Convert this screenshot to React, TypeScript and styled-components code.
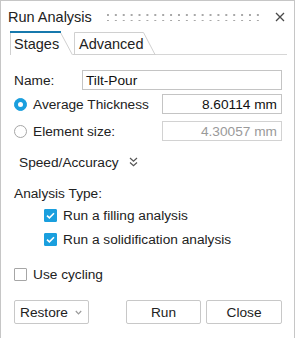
import React, { FC } from 'react';
import styled, { createGlobalStyle } from 'styled-components';

const GlobalStyle = createGlobalStyle`
  html, body {
    margin: 0;
    padding: 0;
    background: #ffffff;
    overflow: hidden;
  }
  body {
    font-family: "Liberation Sans", Arial, sans-serif;
    color: #222222;
  }
`;

const BLUE = '#1a9fde';

const Panel = styled.div`
  box-sizing: border-box;
  width: 295px;
  height: 338px;
  border: 1px solid #c6c6c6;
  border-bottom: none;
  background: #ffffff;
  display: flex;
  flex-direction: column;
`;

const TitleBar = styled.div`
  display: flex;
  align-items: center;
  height: 26px;
  padding: 3px 8px 0 7px;
`;

const Title = styled.div`
  font-size: 14.5px;
  color: #222;
  white-space: nowrap;
`;

const Grip = styled.div`
  flex: 1;
  height: 8px;
  margin: 0 10px 0 15px;
  background-image: radial-gradient(circle, #a8a8a8 1px, transparent 1.3px);
  background-size: 7.9px 6px;
  background-position: -3px -1px;
`;

const CloseButton = styled.button`
  width: 12px;
  height: 12px;
  padding: 0;
  border: none;
  background: transparent;
  display: flex;
  align-items: center;
  justify-content: center;
`;

const TabBar = styled.div`
  display: flex;
  height: 24px;
  margin-top: 1px;
  padding-left: 9px;
`;

const Tab = styled.div<{ $width: number; $active?: boolean }>`
  position: relative;
  width: ${(p) => p.$width}px;
  height: 24px;
  box-sizing: border-box;
  padding: 5px 0 0 ${(p) => (p.$active ? 4 : 6)}px;
  font-size: 14.5px;
  color: #222;
  white-space: nowrap;
  svg {
    position: absolute;
    left: 0;
    top: 0;
  }
  span {
    position: relative;
  }
`;

const TabFill = styled.div`
  flex: 1;
  margin-right: 7px;
  border-bottom: 1px solid #d6d6d6;
`;

const Content = styled.div`
  display: flex;
  flex-direction: column;
  padding: 0 12px 0 13px;
`;

const Row = styled.div<{ $top: number; $indent?: number }>`
  display: flex;
  align-items: center;
  height: 20px;
  margin-top: ${(p) => p.$top}px;
  padding-left: ${(p) => p.$indent ?? 0}px;
  font-size: 13.7px;
  white-space: nowrap;
`;

const Label = styled.div<{ $width: number }>`
  width: ${(p) => p.$width}px;
  flex-shrink: 0;
`;

const Field = styled.div<{ $width: number; $align?: 'left' | 'right'; $disabled?: boolean }>`
  box-sizing: border-box;
  width: ${(p) => p.$width}px;
  height: 20px;
  border: 1px solid ${(p) => (p.$disabled ? '#d2d2d2' : '#c4c4c4')};
  padding: 0 4px 0 3px;
  display: flex;
  align-items: center;
  justify-content: ${(p) => (p.$align === 'right' ? 'flex-end' : 'flex-start')};
  color: ${(p) => (p.$disabled ? '#9a9a9a' : '#111')};
  font-size: 13.7px;
`;

const Radio = styled.span<{ $checked?: boolean }>`
  box-sizing: border-box;
  width: 13px;
  height: 13px;
  border-radius: 50%;
  flex-shrink: 0;
  margin-right: 6px;
  display: flex;
  align-items: center;
  justify-content: center;
  background: ${(p) => (p.$checked ? BLUE : '#fff')};
  border: 1px solid ${(p) => (p.$checked ? BLUE : '#a6a6a6')};
  &::after {
    content: '';
    width: 5px;
    height: 5px;
    border-radius: 50%;
    background: #fff;
    display: ${(p) => (p.$checked ? 'block' : 'none')};
  }
`;

const Check = styled.span<{ $checked?: boolean }>`
  box-sizing: border-box;
  width: 13px;
  height: 13px;
  border-radius: 1px;
  flex-shrink: 0;
  margin-right: 6px;
  display: flex;
  align-items: center;
  justify-content: center;
  background: ${(p) => (p.$checked ? BLUE : '#fff')};
  border: 1px solid ${(p) => (p.$checked ? BLUE : '#a6a6a6')};
`;

const Toggle = styled.span`
  display: flex;
  align-items: center;
  gap: 10px;
`;

const ButtonRow = styled.div`
  display: flex;
  align-items: center;
  gap: 5px;
  margin-top: 16px;
`;

const Button = styled.button<{ $width: number }>`
  box-sizing: border-box;
  width: ${(p) => p.$width}px;
  height: 24px;
  border: 1px solid #c8c8c8;
  border-radius: 2px;
  background: #fff;
  font-family: "Liberation Sans", Arial, sans-serif;
  font-size: 13.7px;
  color: #222;
  padding: 0;
  display: flex;
  align-items: center;
  justify-content: center;
`;

const DropButton = styled(Button)`
  justify-content: space-between;
  padding: 0 6px 0 5px;
  margin-right: auto;
`;

const CheckMark = () => (
  <svg width="9" height="7" viewBox="0 0 9 7">
    <path d="M1 3.6 L3.4 5.8 L8 1.2" fill="none" stroke="#fff" strokeWidth="1.6" />
  </svg>
);

const App: FC = () => (
  <>
    <GlobalStyle />
    <Panel>
      <TitleBar>
        <Title>Run Analysis</Title>
        <Grip />
        <CloseButton aria-label="Close">
          <svg width="10" height="10" viewBox="0 0 10 10">
            <path d="M1 1 L9 9 M9 1 L1 9" stroke="#4a4a4a" strokeWidth="1.3" />
          </svg>
        </CloseButton>
      </TitleBar>

      <TabBar>
        <Tab $width={63} $active>
          <svg width="63" height="24" viewBox="0 0 63 24">
            <path d="M0.5 24 V1.5 H50.5 L62.5 24" fill="#fff" stroke="#d0d0d0" />
            <path d="M0 1 H51" stroke="#1679ad" strokeWidth="2" />
          </svg>
          <span>Stages</span>
        </Tab>
        <Tab $width={83}>
          <svg width="83" height="24" viewBox="0 0 83 24">
            <path d="M1.5 23.5 V1.5 H70.5 L82 23.5 M0 23.5 H83" fill="#fff" stroke="#d0d0d0" />
          </svg>
          <span>Advanced</span>
        </Tab>
        <TabFill />
      </TabBar>

      <Content>
        <Row $top={15}>
          <Label $width={68}>Name:</Label>
          <Field $width={200}>Tilt-Pour</Field>
        </Row>
        <Row $top={4}>
          <Radio $checked />
          <Label $width={129}>Average Thickness</Label>
          <Field $width={120} $align="right">8.60114 mm</Field>
        </Row>
        <Row $top={7}>
          <Radio />
          <Label $width={129}>Element size:</Label>
          <Field $width={120} $align="right" $disabled>4.30057 mm</Field>
        </Row>
        <Row $top={11} $indent={5}>
          <Toggle>
            Speed/Accuracy
            <svg width="9" height="10" viewBox="0 0 9 10">
              <path d="M1 1 L4.5 4.3 L8 1 M1 5.5 L4.5 8.8 L8 5.5" fill="none" stroke="#555" strokeWidth="1.2" />
            </svg>
          </Toggle>
        </Row>
        <Row $top={11}>Analysis Type:</Row>
        <Row $top={2} $indent={30}>
          <Check $checked>
            <CheckMark />
          </Check>
          Run a filling analysis
        </Row>
        <Row $top={4} $indent={30}>
          <Check $checked>
            <CheckMark />
          </Check>
          Run a solidification analysis
        </Row>
        <Row $top={15}>
          <Check />
          Use cycling
        </Row>
        <ButtonRow>
          <DropButton $width={75}>
            Restore
            <svg width="7" height="5" viewBox="0 0 7 5">
              <path d="M0.8 1 L3.5 3.8 L6.2 1" fill="none" stroke="#9a9a9a" strokeWidth="1.2" />
            </svg>
          </DropButton>
          <Button $width={75}>Run</Button>
          <Button $width={76}>Close</Button>
        </ButtonRow>
      </Content>
    </Panel>
  </>
);

export default App;
